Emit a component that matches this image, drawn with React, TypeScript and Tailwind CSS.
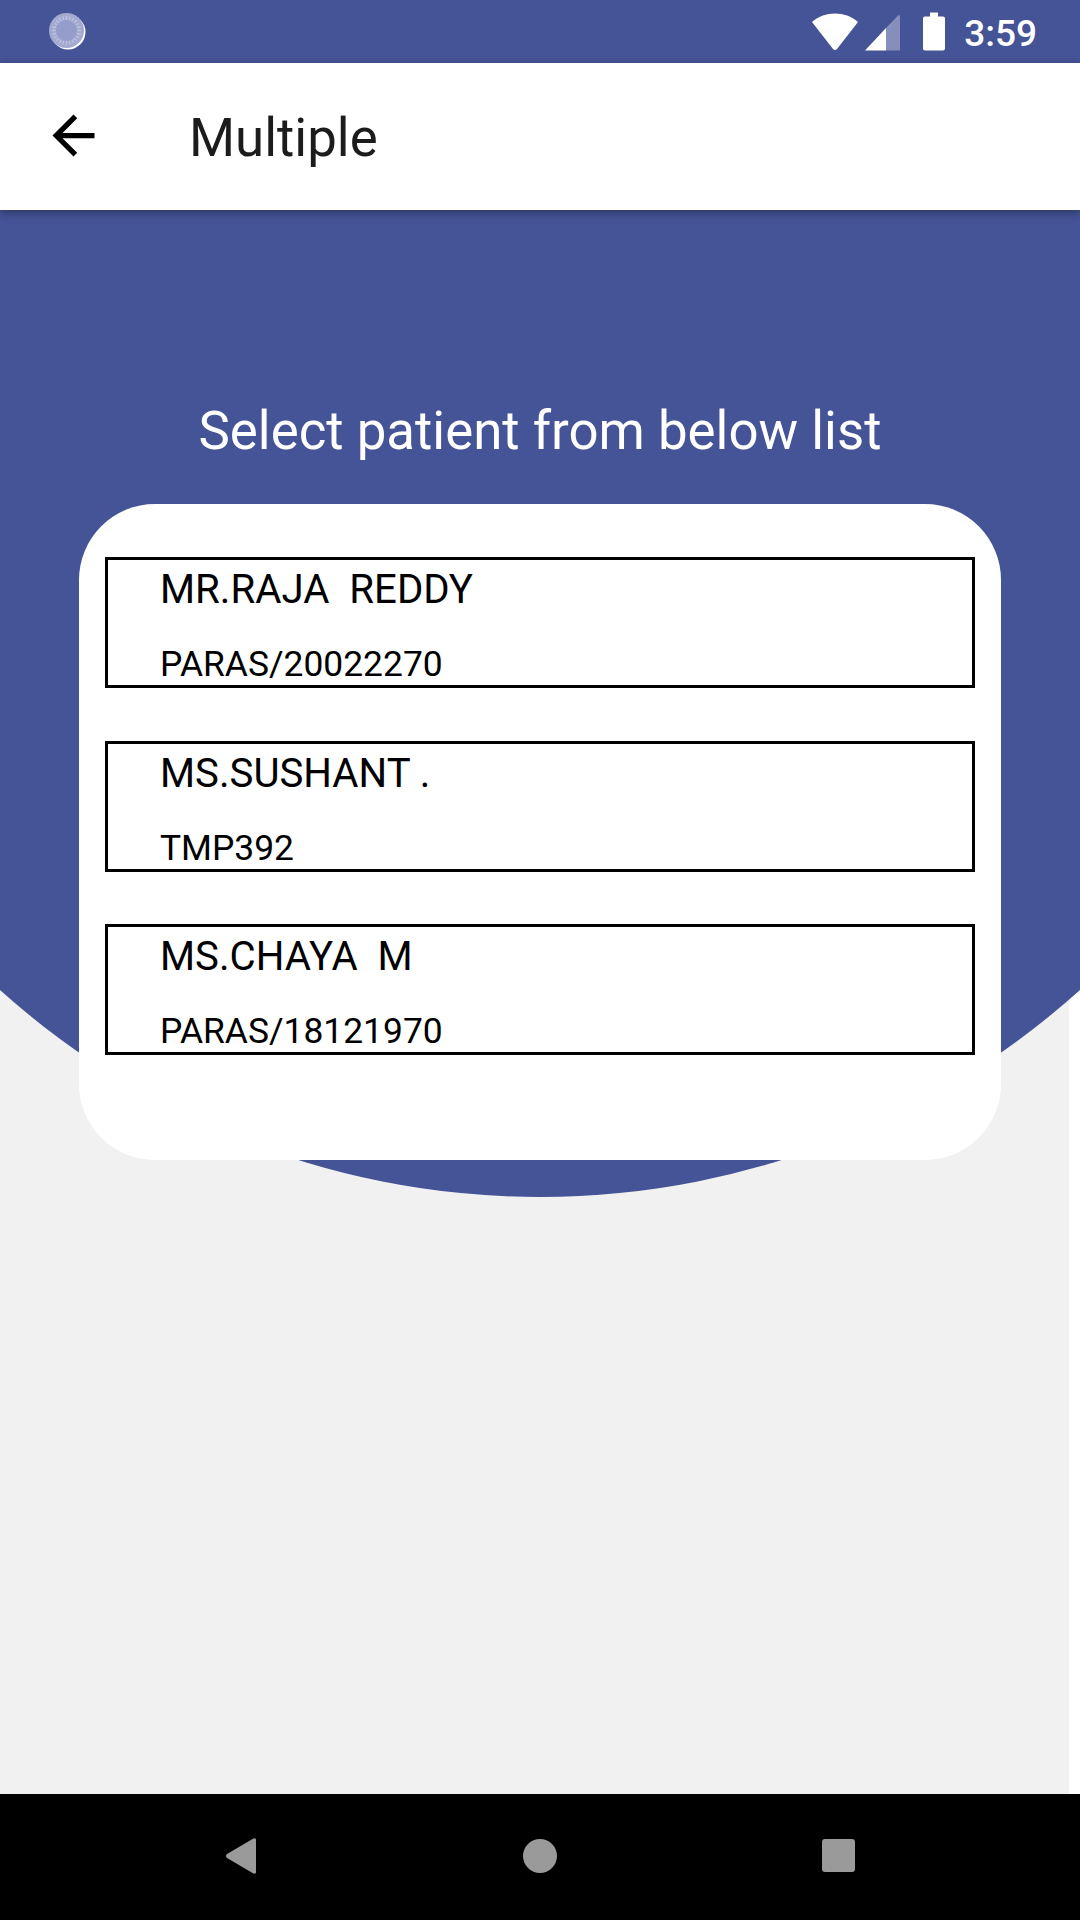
const patients = [
  { name: "MR.RAJA  REDDY", id: "PARAS/20022270" },
  { name: "MS.SUSHANT .", id: "TMP392" },
  { name: "MS.CHAYA  M", id: "PARAS/18121970" },
];

function StatusIcons() {
  return (
    <svg width="134" height="42" viewBox="0 -2 134 42" className="shrink-0 mt-[-2px]">
      <path d="M0 8 C13 -3.3 33 -3.3 46 8 L25 35 Q23 37 21 35 Z" fill="#fff" />
      <path d="M53 36.5 L74 14 V36.5 Z" fill="#fff" />
      <path d="M74 14 L86 1.5 Q88 0.5 88 2.5 V36.5 H74 Z" fill="#fff" fillOpacity="0.35" />
      <path d="M118 -1.5 H126 V2.5 H131 Q133 2.5 133 4.5 V34.5 Q133 36.5 131 36.5 H113 Q111 36.5 111 34.5 V4.5 Q111 2.5 113 2.5 H118 Z" fill="#fff" />
    </svg>
  );
}

function LoadingGlyph() {
  const ticks = Array.from({ length: 24 }, (_, i) => (i * 360) / 24);
  return (
    <svg width="38" height="38" viewBox="0 0 38 38">
      <circle cx="19" cy="19" r="17.5" fill="#fff" />
      <circle cx="17.5" cy="17.5" r="17.5" fill="#a3aad2" />
      <circle cx="17.5" cy="17.5" r="11" fill="#959dcb" />
      {ticks.map((deg) => (
        <line key={deg} x1="17.5" y1="3" x2="17.5" y2="7" stroke="#bcc1de" strokeWidth="1.4" transform={`rotate(${deg} 17.5 17.5)`} />
      ))}
    </svg>
  );
}

export default function App() {
  return (
    <div className="w-[1080px] h-[1920px] flex flex-col overflow-hidden bg-white font-['Roboto',sans-serif]">
      <div className="h-[63px] shrink-0 bg-[#455397] flex items-center pl-[49px] pr-[43px]">
        <LoadingGlyph />
        <div className="ml-auto flex items-center mt-[4px]">
          <StatusIcons />
          <span className="ml-[18px] text-[37px] font-medium text-white leading-none">3:59</span>
        </div>
      </div>

      <div className="h-[147px] shrink-0 bg-white flex items-center shadow-[0_3px_8px_rgba(0,0,0,0.35)] relative z-10">
        <svg width="63" height="63" viewBox="0 0 24 24" className="ml-[42px] mt-[-3px]" fill="#000">
          <path d="M20 11H7.83l5.59-5.59L12 4l-8 8 8 8 1.41-1.41L7.83 13H20v-2z" />
        </svg>
        <h1 className="ml-[84px] mt-[3px] text-[52.8px] leading-none text-[#1c1c1c] font-normal">Multiple</h1>
      </div>

      <main className="flex-1 grid grid-cols-[1069px_11px]">
        <div className="col-start-1 row-start-1 bg-[#f1f1f1]" />
        <div className="col-start-1 col-end-3 row-start-1 ml-[-268px] w-[1616px] h-[987px] bg-[#455397] rounded-b-[808px]" />
        <div className="col-start-1 col-end-3 row-start-1 flex flex-col items-center">
          <p className="mt-[191px] text-[52.8px] leading-[60px] text-white">Select patient from below list</p>
          <section className="mt-[43px] w-[922px] h-[656px] bg-white rounded-[76px] px-[26px] pt-[53px] flex flex-col gap-[52.5px]">
            {patients.map((p) => (
              <div key={p.id} className="h-[131px] border-[3px] border-black pl-[52px] flex flex-col overflow-hidden text-black">
                <span className="mt-[6px] text-[40.2px] leading-[48px] whitespace-pre">{p.name}</span>
                <span className="mt-[29px] text-[35.4px] leading-[42px] whitespace-pre">{p.id}</span>
              </div>
            ))}
          </section>
        </div>
      </main>

      <nav className="h-[126px] shrink-0 bg-black flex items-center pl-[226px] pb-[3px]">
        <svg width="30" height="36" viewBox="0 0 30 36" fill="#9a9a9a">
          <path d="M27 0.8 Q30 -0.5 30 2 V34 Q30 36.5 27 35.2 L1 20 Q-1 18 1 16 Z" />
        </svg>
        <div className="ml-[267px] w-[34px] h-[34px] rounded-full bg-[#9a9a9a]" />
        <div className="ml-[265px] w-[33px] h-[33px] rounded-[3px] bg-[#9a9a9a]" />
      </nav>
    </div>
  );
}
